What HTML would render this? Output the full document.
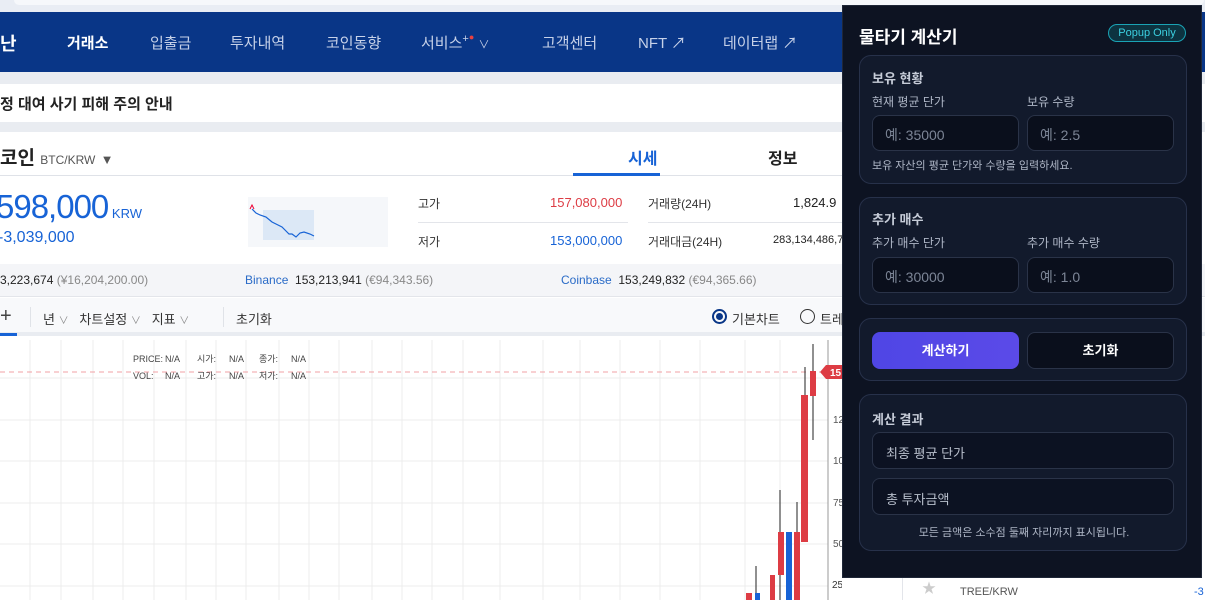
<!DOCTYPE html>
<html><head><meta charset="utf-8"><style>
*{box-sizing:border-box;margin:0;padding:0}
body{width:1205px;height:600px;overflow:hidden;background:#fff;font-family:"Liberation Sans","Noto Sans CJK KR",sans-serif;position:relative}
.a{position:absolute;white-space:nowrap}
.nav{position:absolute;left:0;top:12px;width:1205px;height:60px;background:#093687}
.nav span{position:absolute;top:20px;color:#c6d1e8;font-size:15px}
.pop{position:absolute;left:842px;top:5px;width:360px;height:573px;background:#0d1322;border:1px solid #1f2738}
.sec{position:absolute;left:16px;width:328px;background:#121a2c;border:1px solid #27314a;border-radius:12px}
.lbl{position:absolute;color:#aeb6c6;font-size:13px}
.inp{position:absolute;height:36px;background:#0a0f1c;border:1px solid #2a3348;border-radius:8px;color:#7c8596;font-size:14px;padding:9px 0 0 12px}
</style></head><body>
<div class="a" style="left:0;top:0;width:1205px;height:12px;background:#e9edf4"></div>
<div class="a" style="left:14px;top:0;width:1190px;height:5px;background:#f6f8fb;border-radius:0 0 8px 8px"></div>
<div class="nav">
<span style="left:0;color:#fff;font-weight:bold;font-size:18px;top:18px">난</span>
<span style="left:67px;color:#fff;font-weight:bold">거래소</span>
<span style="left:150px">입출금</span>
<span style="left:230px">투자내역</span>
<span style="left:326px">코인동향</span>
<span style="left:421px">서비스<sup style="font-size:11px">+</sup><b style="color:#e84040;font-size:9px;vertical-align:top">●</b> <span style="position:static;font-size:11px">∨</span></span>
<span style="left:542px">고객센터</span>
<span style="left:638px">NFT ↗</span>
<span style="left:723px">데이터랩 ↗</span>
</div>
<div class="a" style="left:0;top:72px;width:1205px;height:12px;background:#e9ecf1"></div>
<div class="a" style="left:0;top:93px;font-size:15px;font-weight:bold;color:#222">정 대여 사기 피해 주의 안내</div>
<div class="a" style="left:0;top:122px;width:1205px;height:10px;background:#e9ecf1"></div>
<div class="a" style="left:0;top:143px;font-size:19px;font-weight:bold;color:#222">코인 <span style="font-size:12px;font-weight:normal;color:#555">BTC/KRW</span> <span style="font-size:13px;color:#555">▼</span></div>
<div class="a" style="left:628px;top:145px;font-size:16px;font-weight:bold;color:#1763d6">시세</div>
<div class="a" style="left:768px;top:145px;font-size:16px;font-weight:bold;color:#222">정보</div>
<div class="a" style="left:0;top:175px;width:842px;height:1px;background:#dfe2e8"></div>
<div class="a" style="left:573px;top:173px;width:87px;height:3px;background:#1763d6"></div>
<div class="a" style="left:-4px;top:188px;font-size:33px;color:#1763d6;letter-spacing:-1px">598,000<span style="font-size:13px;letter-spacing:0"> KRW</span></div>
<div class="a" style="left:-2px;top:229px;font-size:16px;color:#1763d6">-3,039,000</div>
<div class="a" style="left:248px;top:197px;width:140px;height:50px;background:#f5f7fa">
<svg width="140" height="50"><rect x="15" y="13" width="51" height="30" fill="#dce8f6"/><polyline points="4,12 8,16 12,18 18,20 24,25 30,28 34,30 38,34 41,37 44,37 48,40 52,36 56,35 62,37 66,39" fill="none" stroke="#1763d6" stroke-width="1.2"/><polyline points="2,12 4,8 6,12" fill="none" stroke="#e03" stroke-width="1"/></svg></div>
<div class="a" style="left:418px;top:195px;font-size:12px;color:#333">고가</div>
<div class="a" style="left:550px;top:195px;font-size:13px;color:#dd3c44">157,080,000</div>
<div class="a" style="left:418px;top:233px;font-size:12px;color:#333">저가</div>
<div class="a" style="left:550px;top:233px;font-size:13px;color:#1763d6">153,000,000</div>
<div class="a" style="left:418px;top:222px;width:210px;height:1px;background:#e3e5ea"></div>
<div class="a" style="left:648px;top:222px;width:194px;height:1px;background:#e3e5ea"></div>
<div class="a" style="left:648px;top:195px;font-size:12px;color:#333">거래량(24H)</div>
<div class="a" style="left:793px;top:195px;font-size:13px;color:#222">1,824.9</div>
<div class="a" style="left:648px;top:233px;font-size:12px;color:#333">거래대금(24H)</div>
<div class="a" style="left:773px;top:234px;font-size:11px;color:#222">283,134,486,7</div>
<div class="a" style="left:0;top:264px;width:1205px;height:33px;background:#f4f5f8;border-bottom:1px solid #e3e5ea"></div>
<div class="a" style="left:0;top:273px;font-size:12px;color:#222">3,223,674 <span style="color:#888">(¥16,204,200.00)</span></div>
<div class="a" style="left:245px;top:273px;font-size:12px;color:#2a6bc7">Binance <span style="color:#222">&nbsp;153,213,941</span> <span style="color:#888">(€94,343.56)</span></div>
<div class="a" style="left:561px;top:273px;font-size:12px;color:#2a6bc7">Coinbase <span style="color:#222">&nbsp;153,249,832</span> <span style="color:#888">(€94,365.66)</span></div>
<div class="a" style="left:0;top:298px;width:1205px;height:38px;background:#f8f9fb;border-bottom:4px solid #e9ecf1"></div>
<div class="a" style="left:0;top:333px;width:17px;height:3px;background:#1763d6"></div>
<div class="a" style="left:0;top:305px;font-size:20px;color:#444">+</div>
<div class="a" style="left:30px;top:307px;width:1px;height:20px;background:#e0e3e8"></div>
<div class="a" style="left:43px;top:309px;font-size:13px;color:#333">년 <span style="font-size:10px;color:#888">∨</span>&nbsp;&nbsp; 차트설정 <span style="font-size:10px;color:#888">∨</span>&nbsp;&nbsp; 지표 <span style="font-size:10px;color:#888">∨</span></div>
<div class="a" style="left:223px;top:307px;width:1px;height:20px;background:#e0e3e8"></div>
<div class="a" style="left:236px;top:309px;font-size:13px;color:#333">초기화</div>
<div class="a" style="left:712px;top:309px;width:15px;height:15px;border:2px solid #093687;border-radius:50%"><div style="margin:2px;width:7px;height:7px;border-radius:50%;background:#093687"></div></div>
<div class="a" style="left:732px;top:309px;font-size:13px;color:#333">기본차트</div>
<div class="a" style="left:800px;top:309px;width:15px;height:15px;border:1px solid #333;border-radius:50%"></div>
<div class="a" style="left:820px;top:309px;font-size:13px;color:#333">트레</div>
<svg class="a" style="left:0;top:340px" width="842" height="260">
<g stroke="#ececec" stroke-width="1">
<line x1="0" y1="80" x2="828" y2="80"/><line x1="0" y1="121" x2="828" y2="121"/><line x1="0" y1="163" x2="828" y2="163"/><line x1="0" y1="204" x2="828" y2="204"/><line x1="0" y1="246" x2="828" y2="246"/><line x1="0" y1="38" x2="828" y2="38"/>
<line x1="30" y1="0" x2="30" y2="260"/><line x1="61" y1="0" x2="61" y2="260"/><line x1="93" y1="0" x2="93" y2="260"/><line x1="123" y1="0" x2="123" y2="260"/><line x1="154" y1="0" x2="154" y2="260"/><line x1="186" y1="0" x2="186" y2="260"/><line x1="216" y1="0" x2="216" y2="260"/><line x1="246" y1="0" x2="246" y2="260"/><line x1="279" y1="0" x2="279" y2="260"/><line x1="309" y1="0" x2="309" y2="260"/><line x1="339" y1="0" x2="339" y2="260"/><line x1="372" y1="0" x2="372" y2="260"/><line x1="402" y1="0" x2="402" y2="260"/><line x1="432" y1="0" x2="432" y2="260"/><line x1="463" y1="0" x2="463" y2="260"/><line x1="500" y1="0" x2="500" y2="260"/><line x1="543" y1="0" x2="543" y2="260"/><line x1="580" y1="0" x2="580" y2="260"/><line x1="620" y1="0" x2="620" y2="260"/><line x1="660" y1="0" x2="660" y2="260"/><line x1="700" y1="0" x2="700" y2="260"/><line x1="745" y1="0" x2="745" y2="260"/><line x1="780" y1="0" x2="780" y2="260"/>
</g>
<line x1="0" y1="32" x2="820" y2="32" stroke="#f0a0a4" stroke-dasharray="5,4"/>
<line x1="828" y1="0" x2="828" y2="260" stroke="#999"/>
<g stroke="#222" stroke-width="1"><line x1="813" y1="4" x2="813" y2="100"/><line x1="805" y1="27" x2="805" y2="143"/><line x1="780" y1="150" x2="780" y2="260"/><line x1="797" y1="162" x2="797" y2="260"/><line x1="771" y1="239" x2="771" y2="260"/><line x1="756" y1="226" x2="756" y2="260"/></g>
<rect x="810" y="31" width="6" height="25" fill="#dd3c44"/><rect x="801" y="55" width="7" height="147" fill="#dd3c44"/><rect x="778" y="192" width="6" height="43" fill="#dd3c44"/><rect x="786" y="192" width="6" height="69" fill="#1763d6"/><rect x="794" y="192" width="6" height="69" fill="#dd3c44"/><rect x="770" y="235" width="5" height="25" fill="#dd3c44"/><rect x="746" y="253" width="6" height="10" fill="#dd3c44"/><rect x="755" y="253" width="5" height="10" fill="#1763d6"/>
<polygon points="820,32 826,25 842,25 842,39 826,39" fill="#dd3c44"/>
<text x="830" y="36" font-size="10" fill="#fff" font-weight="bold">15</text>
<text x="832" y="248" font-size="10" fill="#333">25,000,000</text>
<text x="833" y="83" font-size="10" fill="#555">12</text><text x="833" y="124" font-size="10" fill="#555">10</text><text x="833" y="166" font-size="10" fill="#555">75</text><text x="833" y="207" font-size="10" fill="#555">50</text>
<g font-size="9" fill="#444"><text x="133" y="22">PRICE:</text><text x="165" y="22">N/A</text><text x="197" y="22">시가:</text><text x="229" y="22">N/A</text><text x="259" y="22">종가:</text><text x="291" y="22">N/A</text>
<text x="133" y="39">VOL:</text><text x="165" y="39">N/A</text><text x="197" y="39">고가:</text><text x="229" y="39">N/A</text><text x="259" y="39">저가:</text><text x="291" y="39">N/A</text></g>
</svg>
<div class="a" style="left:902px;top:578px;width:303px;height:22px;background:#fff;border-left:1px solid #e3e5ea"></div>
<div class="a" style="left:922px;top:578px;font-size:14px;color:#ccc">★</div>
<div class="a" style="left:960px;top:586px;font-size:11px;color:#555">TREE/KRW</div>
<div class="a" style="left:1194px;top:586px;font-size:11px;color:#1763d6">-3</div>
<div class="pop">
<div class="a" style="left:16px;top:17px;font-size:17px;font-weight:bold;color:#fff">물타기 계산기</div>
<div class="a" style="left:265px;top:18px;width:78px;height:18px;border:1px solid #1aa3b5;border-radius:9px;background:#0d3340;color:#3cd0e0;font-size:11px;text-align:center;line-height:16px">Popup Only</div>
<div class="sec" style="top:49px;height:129px">
<div class="lbl" style="left:12px;top:12px;font-weight:bold;color:#c6ccd8">보유 현황</div>
<div class="lbl" style="left:12px;top:37px;font-size:12px">현재 평균 단가</div>
<div class="lbl" style="left:167px;top:37px;font-size:12px">보유 수량</div>
<div class="inp" style="left:12px;top:59px;width:147px">예: 35000</div>
<div class="inp" style="left:167px;top:59px;width:147px">예: 2.5</div>
<div class="lbl" style="left:12px;top:101px;font-size:11px">보유 자산의 평균 단가와 수량을 입력하세요.</div>
</div>
<div class="sec" style="top:191px;height:108px">
<div class="lbl" style="left:12px;top:11px;font-weight:bold;color:#c6ccd8">추가 매수</div>
<div class="lbl" style="left:12px;top:36px;font-size:12px">추가 매수 단가</div>
<div class="lbl" style="left:167px;top:36px;font-size:12px">추가 매수 수량</div>
<div class="inp" style="left:12px;top:59px;width:147px">예: 30000</div>
<div class="inp" style="left:167px;top:59px;width:147px">예: 1.0</div>
</div>
<div class="sec" style="top:312px;height:63px">
<div class="a" style="left:12px;top:13px;width:147px;height:37px;border-radius:8px;background:linear-gradient(90deg,#4f46e5,#5b4ae8);color:#fff;font-size:13px;font-weight:bold;text-align:center;line-height:37px">계산하기</div>
<div class="a" style="left:167px;top:13px;width:147px;height:37px;border-radius:8px;background:#0a0f1c;border:1px solid #2a3348;color:#fff;font-size:13px;font-weight:bold;text-align:center;line-height:35px">초기화</div>
</div>
<div class="sec" style="top:388px;height:157px">
<div class="lbl" style="left:12px;top:14px;font-weight:bold;color:#c6ccd8">계산 결과</div>
<div class="inp" style="left:12px;top:37px;width:302px;height:37px;background:#0c1222;color:#b8bfcc;font-size:13px;padding:10px 0 0 13px">최종 평균 단가</div>
<div class="inp" style="left:12px;top:83px;width:302px;height:37px;background:#0c1222;color:#b8bfcc;font-size:13px;padding:10px 0 0 13px">총 투자금액</div>
<div class="lbl" style="left:0;width:328px;text-align:center;top:129px;font-size:11px">모든 금액은 소수점 둘째 자리까지 표시됩니다.</div>
</div>
</div>
</body></html>
